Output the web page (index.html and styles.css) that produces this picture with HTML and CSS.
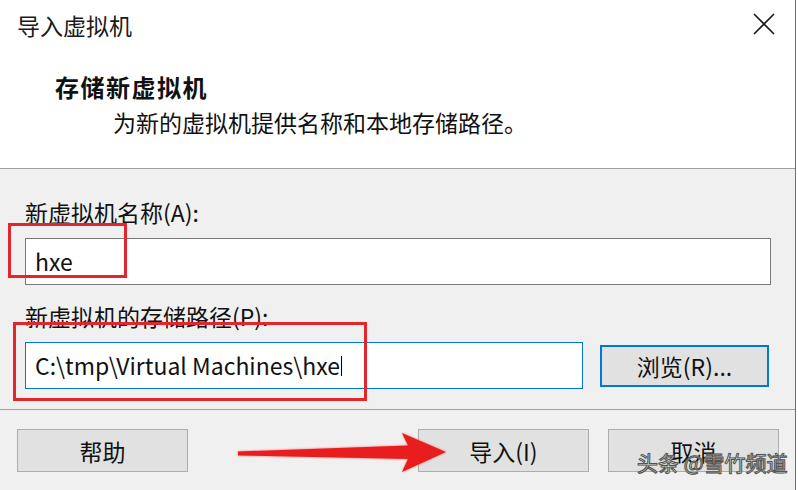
FILE: index.html
```html
<!DOCTYPE html>
<html>
<head>
    <meta charset="UTF-8">
    <link rel="stylesheet" href="styles.css">
</head>
<body>
    <div class="dialog">
        <div class="titlebar">
            <span class="title">导入虚拟机</span>
            <span class="close">
                <svg width="22" height="22" viewBox="0 0 22 22">
                    <path d="M1 1 L21 21 M21 1 L1 21" stroke="#1a1a1a" stroke-width="1.6" fill="none"/>
                </svg>
            </span>
        </div>

        <div class="banner">
            <div class="banner-title">存储新虚拟机</div>
            <div class="banner-desc">为新的虚拟机提供名称和本地存储路径。</div>
        </div>

        <div class="content">
            <div class="field-label">新虚拟机名称(A):</div>
            <div class="textbox">hxe</div>

            <div class="field-label second">新虚拟机的存储路径(P):</div>
            <div class="path-row">
                <div class="textbox focused">C:\tmp\Virtual Machines\hxe<span class="caret"></span></div>
                <button class="btn btn-browse">浏览(R)...</button>
            </div>
        </div>

        <div class="footer">
            <button class="btn">帮助</button>
            <div class="footer-right">
                <button class="btn">导入(I)</button>
                <button class="btn">取消</button>
            </div>
        </div>

        <!-- annotations drawn over the screenshot -->
        <div class="mark mark-name"></div>
        <div class="mark mark-path"></div>
        <svg class="arrow" width="226" height="56" viewBox="228 424 226 56">
            <defs>
                <filter id="glow" x="-10%" y="-30%" width="120%" height="160%">
                    <feGaussianBlur stdDeviation="0.8"/>
                </filter>
            </defs>
            <path d="M238 451.5 L408 445.5 L402 433 L446 452 L402 472 L408 459 L238 455.5 Z" fill="#ff6a6a" filter="url(#glow)"/>
            <path d="M238 451.5 L408 445.5 L402 433 L446 452 L402 472 L408 459 L238 455.5 Z" fill="#e81d1d"/>
        </svg>
        <div class="watermark">头条 @雪竹频道</div>
    </div>
</body>
</html>
```

FILE: styles.css
```css
* {
    box-sizing: border-box;
}

body {
    margin: 0;
    width: 798px;
    height: 490px;
    background: #fff;
    font-family: "Noto Sans CJK SC", sans-serif;
    color: #111;
    overflow: hidden;
}

.dialog {
    position: relative;
    width: 796px;
    height: 490px;
    border-right: 1px solid #6f6f6f;
    display: flex;
    flex-direction: column;
}

.titlebar {
    height: 50px;
    display: flex;
    align-items: center;
    justify-content: space-between;
    padding: 0 20px 0 17px;
}

.title {
    font-size: 23px;
    line-height: 30px;
    color: #1a1a1a;
}

.close {
    display: flex;
    margin-top: -2px;
}

.banner {
    padding: 22px 0 31px 55px;
    border-bottom: 1px solid #a0a0a0;
}

.banner-title {
    font-size: 24px;
    font-weight: 700;
    line-height: 30px;
    letter-spacing: 1.5px;
}

.banner-desc {
    margin-top: 5px;
    padding-left: 58px;
    font-size: 23px;
    line-height: 30px;
}

.content {
    background: #f0f0f0;
    padding: 28px 24px 20px 25px;
    border-bottom: 1px solid #a0a0a0;
}

.field-label {
    font-size: 23px;
    line-height: 30px;
    margin-bottom: 11px;
}

.field-label.second {
    margin-top: 16px;
}

.textbox {
    height: 47px;
    border: 1px solid #7a7a7a;
    background: #fff;
    padding-left: 9px;
    font-size: 23px;
    line-height: 45px;
    display: flex;
    align-items: center;
}

.textbox.focused {
    flex: 0 0 558px;
    border-color: #0078d7;
}

.caret {
    display: inline-block;
    width: 1px;
    height: 20px;
    margin-left: 1px;
    background: #000;
}

.path-row {
    display: flex;
    align-items: center;
    gap: 17px;
}

.btn {
    font-family: inherit;
    font-size: 23px;
    color: #111;
    background: #e1e1e1;
    border: 1px solid #adadad;
    width: 171px;
    height: 43px;
    padding: 0;
}

.btn-browse {
    width: 169px;
    height: 42px;
    border: 2px solid #0078d7;
}

.footer {
    flex: 1;
    background: #f0f0f0;
    display: flex;
    justify-content: space-between;
    align-items: flex-start;
    padding: 19px 16px 0 17px;
}

.footer-right {
    display: flex;
    gap: 19px;
}

/* red annotation boxes */
.mark {
    position: absolute;
    border: 3px solid #e2262b;
}

.mark-name {
    left: 8px;
    top: 223px;
    width: 119px;
    height: 55px;
}

.mark-path {
    left: 13px;
    top: 322px;
    width: 354px;
    height: 79px;
}

.arrow {
    position: absolute;
    left: 228px;
    top: 424px;
}

.watermark {
    position: absolute;
    left: 637px;
    top: 447px;
    font-size: 21px;
    line-height: 30px;
    color: #fff;
    -webkit-text-stroke: 1px #555;
    text-shadow: 0 0 1px #333;
}
```
